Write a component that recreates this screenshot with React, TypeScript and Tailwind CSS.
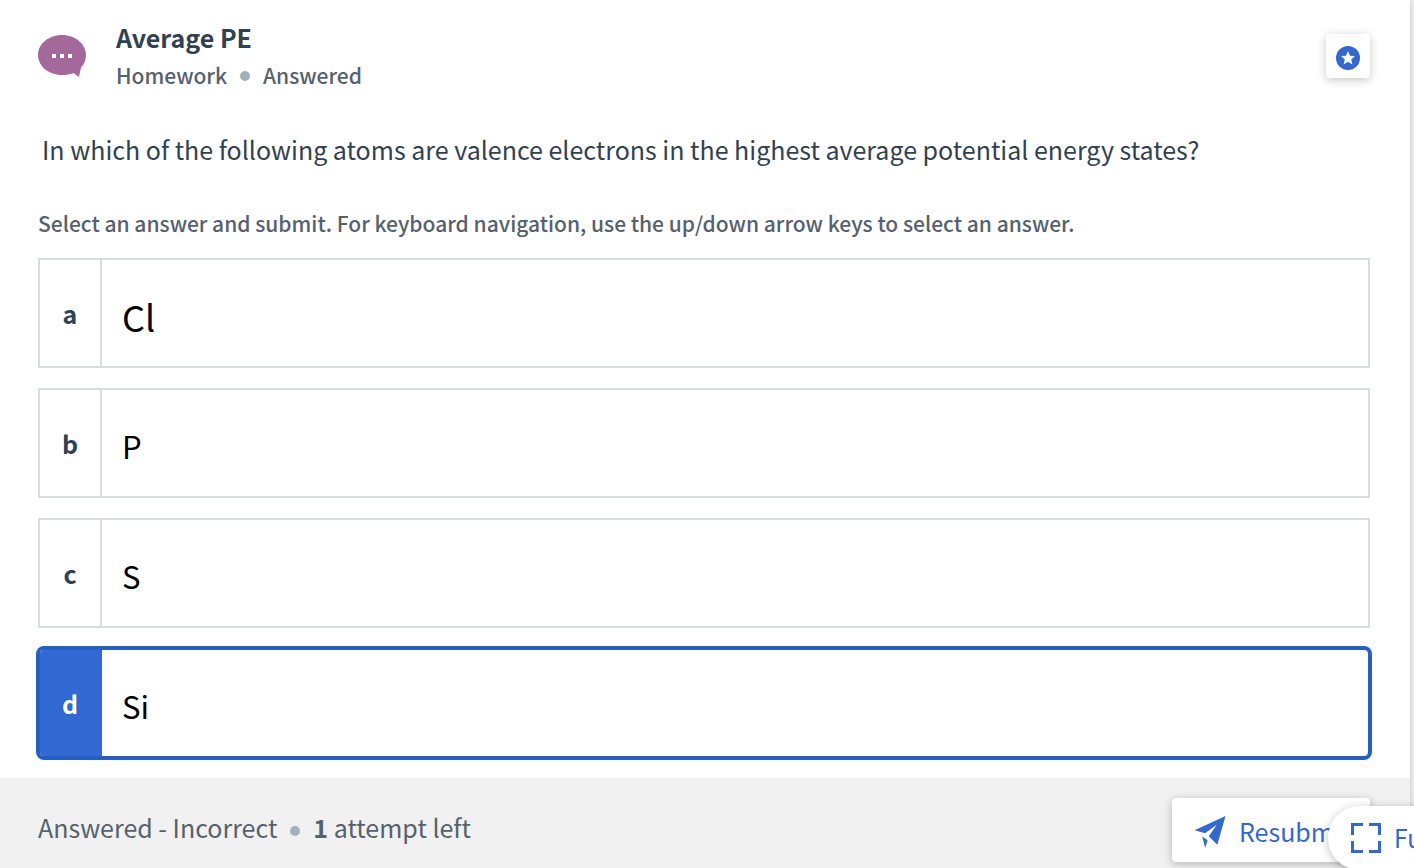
import { useState } from "react";

type Choice = { id: string; text: string; size: string };

const choices: Choice[] = [
  { id: "a", text: "Cl", size: "text-[36px]" },
  { id: "b", text: "P", size: "text-[31px]" },
  { id: "c", text: "S", size: "text-[31px]" },
  { id: "d", text: "Si", size: "text-[31px]" },
];

function DiscussionIcon() {
  return (
    <svg className="mt-[15px] h-[42px] w-12 shrink-0" viewBox="0 0 48 42" aria-hidden="true">
      <path
        d="M24 0C37.3 0 48 9 48 20c0 5-2 9.200-5 12.600L41 42l-5.500-4C32 39.400 28 40 24 40 10.700 40 0 31 0 20S10.700 0 24 0Z"
        fill="#a4689a"
      />
      <path d="M14 19h4v4h-4zM22 19h4v4h-4zM30 19h4v4h-4z" fill="#fff" />
    </svg>
  );
}

function StarIcon() {
  return (
    <svg className="size-6" viewBox="0 0 24 24" aria-hidden="true">
      <circle cx="12" cy="12" r="12" fill="#3268d2" />
      <path
        d="m12 5 2 4.700 5 .4-3.800 3.300 1.200 5L12 15.700l-4.400 2.700 1.200-5L5 10.100l5-.4Z"
        fill="#fff"
      />
    </svg>
  );
}

function PlaneIcon() {
  return (
    <svg className="h-8 w-8 shrink-0" viewBox="0 0 32 32" aria-hidden="true" fill="#3268d2">
      <path d="M31.500 0 0.500 14.200 11 17.300 22.800 8.800 14.800 20.200 23.300 28.800Z" />
      <path d="M8.200 20.500 13.600 24.200 11.200 32Z" />
    </svg>
  );
}

function ExpandIcon() {
  return (
    <svg className="size-[30px] shrink-0" viewBox="0 0 30 30" aria-hidden="true">
      <path
        d="M1.500 12V1.500H12M18 1.500h10.500V12M28.500 18v10.500H18M12 28.500H1.500V18"
        fill="none"
        stroke="#3268d2"
        strokeWidth="3"
      />
    </svg>
  );
}

function Dot({ className }: { className: string }) {
  return (
    <span
      className={`size-[10px] shrink-0 rounded-full bg-[#a3b0b9] ${className}`}
      aria-hidden="true"
    />
  );
}

export default function App() {
  const [selected, setSelected] = useState("d");

  return (
    <div className="flex min-h-screen overflow-hidden bg-[#f1f1f1] pr-1 font-['Noto_Sans_CJK_SC','Noto_Sans',sans-serif] text-[#2f4252]">
      <div className="flex min-w-0 flex-1 flex-col bg-white shadow-[0_0_6px_rgba(0,0,0,0.2)]">
        <main className="flex-1 pt-5 pr-10 pb-[18px] pl-[38px]">
          <header className="flex items-start justify-between">
            <div className="flex items-start gap-[30px]">
              <DiscussionIcon />
              <div>
                <h1 className="text-[25px] leading-[34px] font-bold">Average PE</h1>
                <p className="mt-0.5 flex items-center gap-[13px] text-[21px] leading-[38px] font-medium text-[#56616e]">
                  <span>Homework</span>
                  <Dot className="mt-0.5" />
                  <span>Answered</span>
                </p>
              </div>
            </div>
            <button
              type="button"
              aria-label="Bookmark question"
              className="mt-[14px] flex size-11 items-center justify-center rounded bg-white pt-1 shadow-[0_2px_10px_rgba(0,0,0,0.22)]"
            >
              <StarIcon />
            </button>
          </header>

          <h2 className="mt-[38px] ml-1 text-[25px] leading-[34px]">
            In which of the following atoms are valence electrons in the highest average potential
            energy states?
          </h2>

          <fieldset className="mt-[38px]">
            <legend className="mb-4 text-[21px] leading-[38px] font-medium text-[#56616e]">
              Select an answer and submit. For keyboard navigation, use the up/down arrow keys to
              select an answer.
            </legend>
            <div className="flex flex-col gap-5">
              {choices.map((choice) => {
                const active = choice.id === selected;
                return (
                  <label
                    key={choice.id}
                    className={
                      active
                        ? "flex h-[110px] cursor-pointer rounded-md border-2 border-[#245fc8] bg-white ring-2 ring-[#245fc8]"
                        : "flex h-[110px] cursor-pointer border-2 border-[#d9dce1] bg-white"
                    }
                  >
                    <input
                      type="radio"
                      name="answer"
                      value={choice.id}
                      checked={active}
                      onChange={() => setSelected(choice.id)}
                      className="sr-only"
                    />
                    <span
                      className={
                        active
                          ? "flex w-[62px] items-center justify-center rounded-l border-r-2 border-[#3268d2] bg-[#3268d2] pt-0.5 text-[25px] font-bold text-white"
                          : "flex w-[62px] items-center justify-center border-r-2 border-[#d9dce1] pt-0.5 text-[25px] font-bold"
                      }
                    >
                      {choice.id}
                    </span>
                    <span className={`flex items-center pt-1.5 pl-5 text-black ${choice.size}`}>
                      {choice.text}
                    </span>
                  </label>
                );
              })}
            </div>
          </fieldset>
        </main>

        <footer className="flex h-[90px] items-start justify-between bg-[#f1f1f1] pt-5 pr-10 pl-[38px]">
          <p className="flex items-center gap-[13px] pt-3 text-[25px] leading-[34px] text-[#56616e]">
            <span>Answered - Incorrect</span>
            <Dot className="mt-2" />
            <span>
              <strong>1</strong> attempt left
            </span>
          </p>
          <button
            type="button"
            className="flex h-16 w-[198px] items-center gap-[13px] rounded bg-white pt-1 pl-[22px] text-[25px] text-[#3268d2] shadow-[0_2px_10px_rgba(0,0,0,0.25)]"
          >
            <PlaneIcon />
            Resubmit
          </button>
        </footer>
      </div>

      <button
        type="button"
        className="fixed -right-[130px] -bottom-0.5 flex h-16 w-[216px] items-center gap-[13px] rounded-full bg-white pl-[23px] text-[25px] whitespace-nowrap text-[#3268d2] shadow-[0_2px_10px_rgba(0,0,0,0.25)]"
      >
        <ExpandIcon />
        Fullscreen
      </button>
    </div>
  );
}
